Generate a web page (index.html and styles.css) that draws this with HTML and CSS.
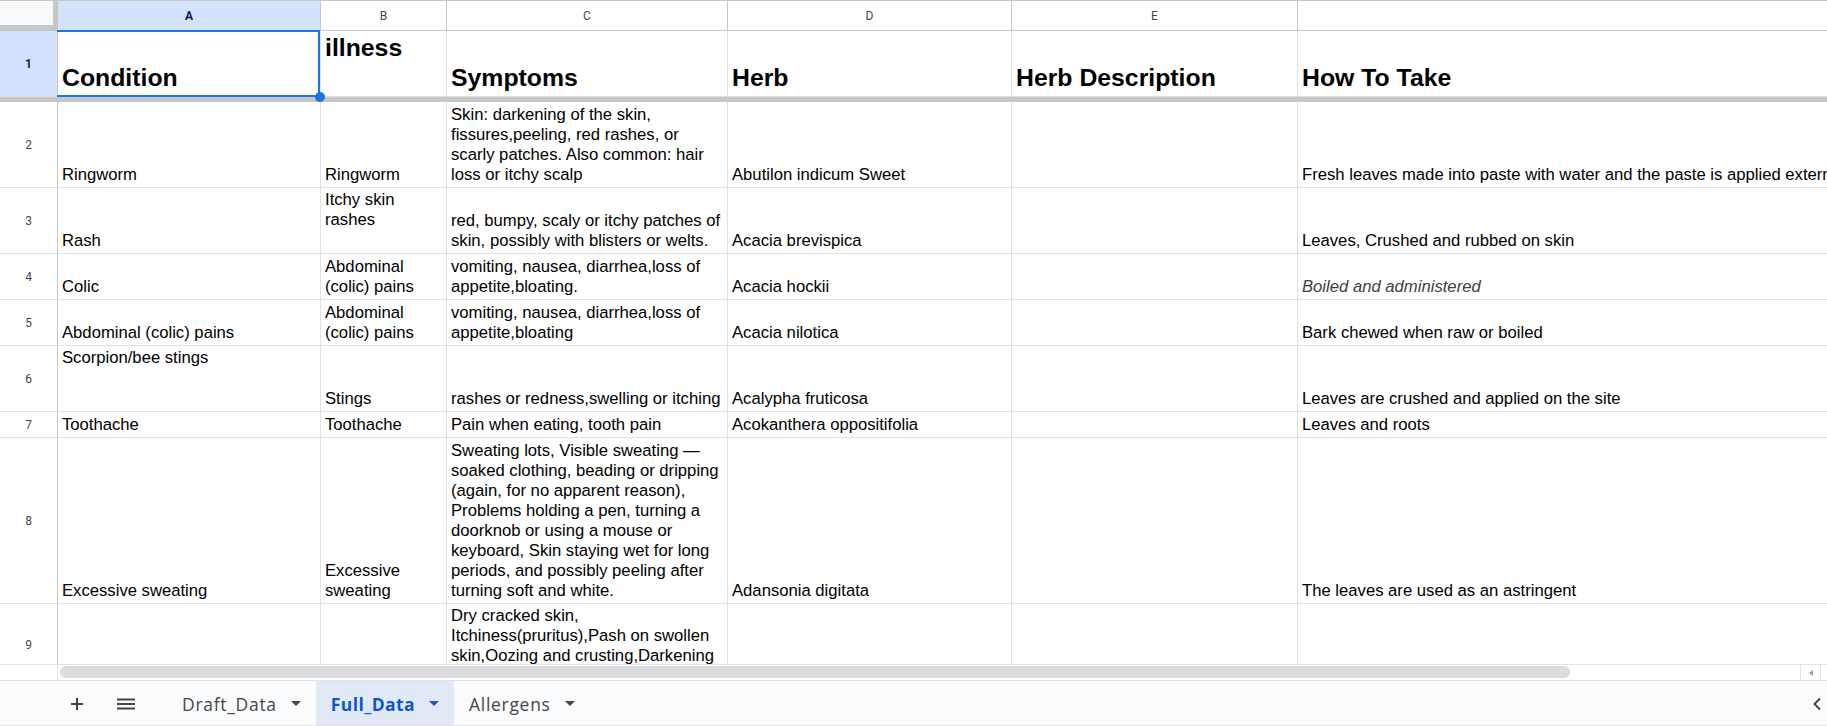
FILE: index.html
```html
<!DOCTYPE html>
<html lang="en">
<head>
<meta charset="utf-8">
<title>Full_Data</title>
<link rel="stylesheet" href="styles.css">
</head>
<body>
<div class="app">
  <div class="viewport">
    <div class="grid">
      <div class="corner"></div>
      <div class="ch on">A</div>
      <div class="ch">B</div>
      <div class="ch">C</div>
      <div class="ch">D</div>
      <div class="ch">E</div>
      <div class="ch"></div>

      <div class="rh on">1</div>
      <div class="c hd"><p>Condition</p></div>
      <div class="c hd top"><p>illness</p></div>
      <div class="c hd"><p>Symptoms</p></div>
      <div class="c hd"><p>Herb</p></div>
      <div class="c hd"><p>Herb Description</p></div>
      <div class="c hd"><p>How To Take</p></div>

      <div class="freeze"></div>

      <div class="rh">2</div>
      <div class="c"><p>Ringworm</p></div>
      <div class="c"><p>Ringworm</p></div>
      <div class="c"><p>Skin: darkening of the skin,<br>fissures,peeling, red rashes, or<br>scarly patches. Also common: hair<br>loss or itchy scalp</p></div>
      <div class="c"><p>Abutilon indicum Sweet</p></div>
      <div class="c"></div>
      <div class="c"><p>Fresh leaves made into paste with water and the paste is applied externally</p></div>

      <div class="rh">3</div>
      <div class="c"><p>Rash</p></div>
      <div class="c top"><p>Itchy skin<br>rashes</p></div>
      <div class="c"><p>red, bumpy, scaly or itchy patches of<br>skin, possibly with blisters or welts.</p></div>
      <div class="c"><p>Acacia brevispica</p></div>
      <div class="c"></div>
      <div class="c"><p>Leaves, Crushed and rubbed on skin</p></div>

      <div class="rh">4</div>
      <div class="c"><p>Colic</p></div>
      <div class="c"><p>Abdominal<br>(colic) pains</p></div>
      <div class="c"><p>vomiting, nausea, diarrhea,loss of<br>appetite,bloating.</p></div>
      <div class="c"><p>Acacia hockii</p></div>
      <div class="c"></div>
      <div class="c it"><p>Boiled and administered</p></div>

      <div class="rh">5</div>
      <div class="c"><p>Abdominal (colic) pains</p></div>
      <div class="c"><p>Abdominal<br>(colic) pains</p></div>
      <div class="c"><p>vomiting, nausea, diarrhea,loss of<br>appetite,bloating</p></div>
      <div class="c"><p>Acacia nilotica</p></div>
      <div class="c"></div>
      <div class="c"><p>Bark chewed when raw or boiled</p></div>

      <div class="rh">6</div>
      <div class="c top"><p>Scorpion/bee stings</p></div>
      <div class="c"><p>Stings</p></div>
      <div class="c"><p>rashes or redness,swelling or itching</p></div>
      <div class="c"><p>Acalypha fruticosa</p></div>
      <div class="c"></div>
      <div class="c"><p>Leaves are crushed and applied on the site</p></div>

      <div class="rh">7</div>
      <div class="c"><p>Toothache</p></div>
      <div class="c"><p>Toothache</p></div>
      <div class="c"><p>Pain when eating, tooth pain</p></div>
      <div class="c"><p>Acokanthera oppositifolia</p></div>
      <div class="c"></div>
      <div class="c"><p>Leaves and roots</p></div>

      <div class="rh">8</div>
      <div class="c"><p>Excessive sweating</p></div>
      <div class="c"><p>Excessive<br>sweating</p></div>
      <div class="c"><p>Sweating lots, Visible sweating —<br>soaked clothing, beading or dripping<br>(again, for no apparent reason),<br>Problems holding a pen, turning a<br>doorknob or using a mouse or<br>keyboard, Skin staying wet for long<br>periods, and possibly peeling after<br>turning soft and white.</p></div>
      <div class="c"><p>Adansonia digitata</p></div>
      <div class="c"></div>
      <div class="c"><p>The leaves are used as an astringent</p></div>

      <div class="rh">9</div>
      <div class="c"></div>
      <div class="c"></div>
      <div class="c top"><p>Dry cracked skin,<br>Itchiness(pruritus),Pash on swollen<br>skin,Oozing and crusting,Darkening<br>of the skin</p></div>
      <div class="c"></div>
      <div class="c"></div>
      <div class="c"></div>
    </div>
    <div class="sel-box"><span class="handle"></span></div>
  </div>

  <div class="hscroll">
    <div class="hs-corner"></div>
    <div class="hs-track"><div class="hs-thumb"></div></div>
    <div class="hs-btn"><i class="hs-arrow"></i></div>
    <div class="hs-end"></div>
  </div>

  <div class="tabs">
    <div class="tb-btn">
      <svg width="14" height="14" viewBox="0 0 14 14"><path d="M7 1v12M1 7h12" stroke="#444746" stroke-width="2" fill="none"/></svg>
    </div>
    <div class="tb-btn">
      <svg width="18" height="12" viewBox="0 0 18 12"><path d="M0 1.5h18M0 6h18M0 10.5h18" stroke="#444746" stroke-width="1.8" fill="none"/></svg>
    </div>
    <div class="tab-list">
      <div class="tab"><span>Draft_Data</span><i class="caret"></i></div>
      <div class="tab active"><span>Full_Data</span><i class="caret"></i></div>
      <div class="tab"><span>Allergens</span><i class="caret"></i></div>
    </div>
    <div class="nav">
      <svg width="10" height="14" viewBox="0 0 10 14"><path d="M8 1.5L2.5 7L8 12.5" stroke="#444746" stroke-width="2" fill="none"/></svg>
    </div>
  </div>
</div>
</body>
</html>
```

FILE: styles.css
```css
* { box-sizing: border-box; margin: 0; padding: 0; }
html, body { width: 1827px; height: 726px; overflow: hidden; background: #fff; }
body { font-family: "Liberation Sans", Arial, sans-serif; color: #000; }

.app { display: flex; flex-direction: column; height: 726px; }

.viewport { position: relative; height: 664px; overflow: hidden; flex: none; }

.grid {
  display: grid;
  grid-template-columns: 58px 263px 126px 281px 284px 286px 1100px;
  grid-template-rows: 31px 66px 5px 86px 66px 46px 46px 66px 26px 166px 82px;
  width: 2198px;
}

.corner {
  background: #f8f9fa;
  border-top: 1px solid #c4c7c5;
  border-right: 5px solid #c4c7c5;
  border-bottom: 6px solid #c4c7c5;
}

.ch {
  display: flex;
  align-items: center;
  justify-content: center;
  border-top: 1px solid #c4c7c5;
  border-right: 1px solid #c4c7c5;
  border-bottom: 1px solid #c4c7c5;
  font-family: Roboto, "Liberation Sans", sans-serif;
  font-size: 12px;
  color: #444746;
  background: #fff;
}
.ch.on { background: #d3e3fd; color: #041e49; font-weight: 700; }

.rh {
  display: flex;
  align-items: center;
  justify-content: center;
  border-right: 1px solid #c4c7c5;
  border-bottom: 1px solid #e1e1e1;
  font-family: Roboto, "Liberation Sans", sans-serif;
  font-size: 12px;
  color: #444746;
  background: #fff;
}
.rh.on { background: #d3e3fd; color: #041e49; font-weight: 700; }

.c {
  display: flex;
  flex-direction: column;
  justify-content: flex-end;
  border-right: 1px solid #e1e1e1;
  border-bottom: 1px solid #e1e1e1;
  padding: 2px 4px;
  font-size: 16.67px;
  line-height: 20px;
  white-space: nowrap;
  min-width: 0;
}
.c.top { justify-content: flex-start; }
.c p { margin: 0; }
.c.hd { font-size: 24.8px; font-weight: 700; line-height: 28px; padding: 3px 4px 4px; }
.c.it { font-style: italic; color: #3c4043; }

.freeze { grid-column: 1 / -1; background: #c4c7c5; }

.sel-box {
  position: absolute;
  left: 57px;
  top: 30px;
  width: 263px;
  height: 67px;
  border: 2px solid #1a73e8;
  border-left: none;
  pointer-events: none;
}
.handle {
  position: absolute;
  right: -7px;
  bottom: -7px;
  width: 10px;
  height: 10px;
  border-radius: 50%;
  background: #1a73e8;
}

.hscroll {
  flex: none;
  height: 16px;
  display: flex;
  border-top: 1px solid #e1e3e1;
  background: #fff;
}
.hs-corner { width: 58px; border-right: 1px solid #e1e3e1; }
.hs-track { flex: 1; padding: 1px 2px; }
.hs-thumb { width: 1510px; height: 12px; border-radius: 6px; background: #dadce0; }
.hs-btn {
  width: 21px;
  display: flex;
  align-items: center;
  justify-content: center;
  border-left: 1px solid #e1e3e1;
  border-right: 1px solid #e1e3e1;
}
.hs-arrow {
  display: block;
  border-top: 3px solid transparent;
  border-bottom: 3px solid transparent;
  border-right: 4px solid #9aa0a6;
}
.hs-end { width: 6px; }

.tabs {
  flex: none;
  height: 46px;
  display: flex;
  align-items: stretch;
  background: #f9fbfd;
  border-top: 1px solid #e1e3e1;
  border-bottom: 1px solid #e1e3e1;
  padding-left: 59px;
}
.tb-btn { width: 36px; display: flex; align-items: center; justify-content: center; padding-top: 1px; }
.tb-btn + .tb-btn { margin-left: 13px; }
.tab-list { display: flex; margin-left: 23px; }
.tab {
  display: flex;
  align-items: center;
  gap: 14px;
  padding: 1px 15px 0;
  font-family: "Open Sans", Roboto, sans-serif;
  font-size: 17.5px;
  font-weight: 500;
  color: #444746;
  letter-spacing: 0.7px;
}
.tab.active { background: #e1e9f7; color: #0b57d0; font-weight: 700; letter-spacing: 0.4px; }
.caret {
  display: block;
  border-left: 5px solid transparent;
  border-right: 5px solid transparent;
  border-top: 5px solid currentColor;
}
.nav { margin-left: auto; display: flex; align-items: center; padding-right: 5px; padding-top: 1px; }
```
